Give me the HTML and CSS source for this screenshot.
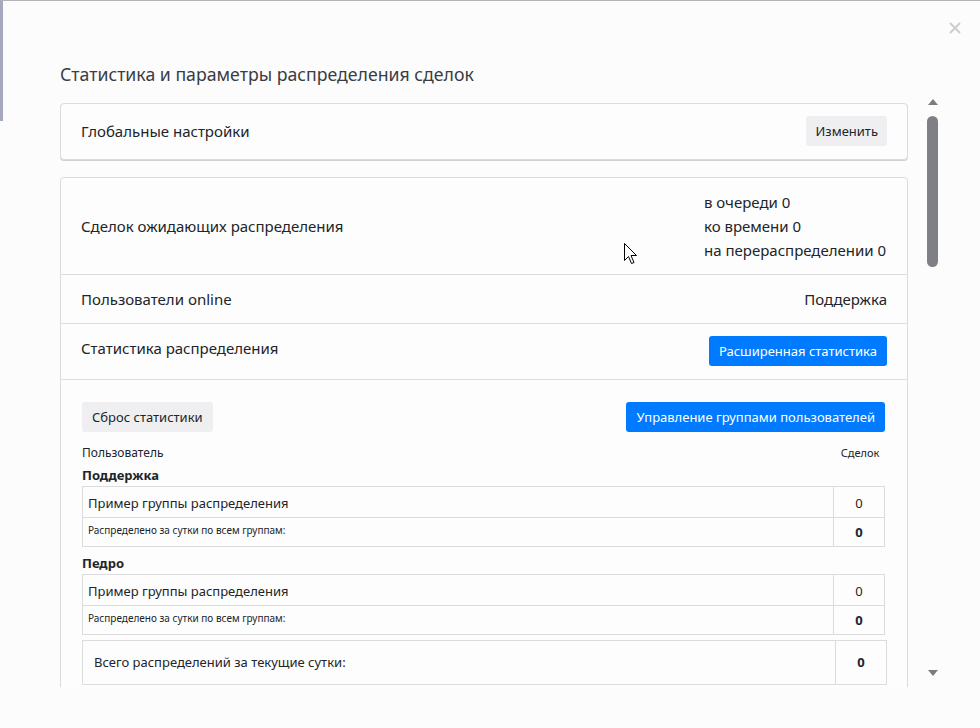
FILE: index.html
```html
<!DOCTYPE html>
<html lang="ru">
<head>
  <meta charset="UTF-8" />
  <meta name="viewport" content="width=device-width, initial-scale=1.0"/>
  <title>Статистика распределения</title>
  <link rel="stylesheet" href="styles.css">
</head>
<body>

  <div class="page">
    <div class="backdrop"></div>

    <div class="modal">
      <div class="modal-top">
        <span class="close" aria-label="Закрыть">
          <svg width="12" height="12" viewBox="0 0 12 12"><path d="M1 1L11 11M11 1L1 11" stroke="#cdcdd0" stroke-width="2"/></svg>
        </span>
      </div>

      <h2 class="modal-title">Статистика и параметры распределения сделок</h2>

      <div class="modal-body">
        <div class="scroll-area">

          <div class="card card-global">
            <span>Глобальные настройки</span>
            <button class="btn btn-light btn-edit">Изменить</button>
          </div>

          <div class="card">
            <div class="row">
              <span>Сделок ожидающих распределения</span>
              <div class="queue">
                <div>в очереди 0</div>
                <div>ко времени 0</div>
                <div>на перераспределении 0</div>
              </div>
            </div>

            <div class="row">
              <span>Пользователи online</span>
              <span>Поддержка</span>
            </div>

            <div class="row row-stats">
              <span class="label-top">Статистика распределения</span>
              <button class="btn btn-primary">Расширенная статистика</button>
            </div>

            <div class="stats">
              <div class="stats-actions">
                <button class="btn btn-light">Сброс статистики</button>
                <button class="btn btn-primary">Управление группами пользователей</button>
              </div>

              <div class="stats-head">
                <span class="head-user">Пользователь</span>
                <span class="head-count">Сделок</span>
              </div>

              <div class="user-name">Поддержка</div>
              <table class="user-table">
                <tr>
                  <td>Пример группы распределения</td>
                  <td class="num">0</td>
                </tr>
                <tr class="day-row">
                  <td><small>Распределено за сутки по всем группам:</small></td>
                  <td class="num"><b>0</b></td>
                </tr>
              </table>

              <div class="user-name">Педро</div>
              <table class="user-table">
                <tr>
                  <td>Пример группы распределения</td>
                  <td class="num">0</td>
                </tr>
                <tr class="day-row">
                  <td><small>Распределено за сутки по всем группам:</small></td>
                  <td class="num"><b>0</b></td>
                </tr>
              </table>

              <table class="total-table">
                <tr>
                  <td>Всего распределений за текущие сутки:</td>
                  <td class="num"><b>0</b></td>
                </tr>
              </table>
            </div>
          </div>

        </div>

        <div class="scrollbar">
          <span class="arrow-up"></span>
          <span class="thumb"></span>
          <span class="arrow-down"></span>
        </div>
      </div>
    </div>

    <svg class="cursor" width="13" height="21" viewBox="0 0 13 21">
      <path d="M0.5 0.5V17.5L4.5 13.5L7.5 20.5L10 19.5L7 12.5H12.5Z" fill="#fff" stroke="#000" stroke-width="1"/>
    </svg>
  </div>

</body>
</html>
```

FILE: styles.css
```css
body {
  margin: 0;
  background: #fcfcfd;
  font-family: 'Noto Sans', 'Open Sans', sans-serif;
  color: #212529;
}

.page {
  display: flex;
  height: 727px;
  border-top: 1px solid #b4b4b8;
  overflow: hidden;
  position: relative;
}

.backdrop {
  width: 3px;
  height: 120px;
  flex-shrink: 0;
  background: #a6a8bf;
}

.modal {
  flex: 1;
  padding: 21px 40px 0 57px;
}

.modal-top {
  display: flex;
  justify-content: flex-end;
  margin-right: -21px;
  height: 12px;
}

.close svg {
  display: block;
}

.modal-title {
  margin: 28px 0 10px 0;
  font-size: 17.7px;
  line-height: 24px;
  font-weight: normal;
  color: #3a3d42;
}

.modal-body {
  display: flex;
  height: 591px;
}

.scroll-area {
  width: 867px;
  padding: 7px 19px 0 0;
  box-sizing: border-box;
  overflow: hidden;
}

.card {
  border: 1px solid #dcdcde;
  border-radius: 4px;
  background: #fdfdfd;
  font-size: 15px;
  line-height: 24px;
}

.card-global {
  display: flex;
  justify-content: space-between;
  align-items: center;
  padding: 12px 20px 13px;
  margin-bottom: 17px;
  box-shadow: 0 1px 0 #d2d2d6;
}

.row {
  display: flex;
  justify-content: space-between;
  align-items: center;
  padding: 12px 20px;
  border-bottom: 1px solid #dcdcde;
}

.row-stats {
  padding-bottom: 13px;
}

.label-top {
  align-self: flex-start;
}

.queue {
  width: 183px;
}

.btn {
  font-family: inherit;
  font-size: 13px;
  line-height: 20px;
  padding: 5px 10px;
  border: none;
  border-radius: 3px;
  cursor: pointer;
}

.btn-edit {
  padding: 5px 9px;
}

.btn-light {
  background: #efeff1;
  color: #212529;
}

.btn-primary {
  background: #007bff;
  color: #fff;
}

.stats {
  padding: 22px 22px 24px 21px;
}

.stats-actions {
  display: flex;
  justify-content: space-between;
}

.stats-head {
  display: flex;
  justify-content: space-between;
  margin-top: 12px;
  font-size: 12px;
  line-height: 18px;
}

.head-count {
  width: 50px;
  text-align: center;
  font-size: 11px;
}

.user-name {
  font-size: 13px;
  font-weight: bold;
  line-height: 18px;
  margin-top: 7px;
}

.stats-head + .user-name {
  margin-top: 4px;
}

.user-table,
.total-table {
  width: 100%;
  border-collapse: collapse;
  font-size: 13px;
}

.user-table {
  margin-top: 2px;
}

.user-table td,
.total-table td {
  border: 1px solid #dcdcdc;
  padding: 7px 5px 4px;
  line-height: 19px;
  vertical-align: top;
}

.user-table .num {
  width: 40px;
  text-align: center;
}

.day-row td {
  padding: 4px 5px 8px;
}

.day-row small {
  display: block;
  font-size: 10px;
  line-height: 16px;
}

.day-row .num {
  padding: 5px 5px 4px;
}

.total-table {
  width: calc(100% + 2px);
  margin-top: 5px;
}

.total-table td {
  padding: 12px 11px;
}

.total-table .num {
  width: 28px;
  text-align: center;
}

.scrollbar {
  width: 11px;
  display: flex;
  flex-direction: column;
  align-items: center;
  padding: 3px 0 11px;
}

.arrow-up,
.arrow-down {
  width: 0;
  height: 0;
  border-left: 5.5px solid transparent;
  border-right: 5.5px solid transparent;
}

.arrow-up {
  border-bottom: 6px solid #7b7b80;
}

.arrow-down {
  border-top: 6px solid #7b7b80;
  margin-top: auto;
}

.thumb {
  width: 11px;
  height: 151px;
  margin-top: 11px;
  border-radius: 6px;
  background: #7f7f86;
}

.cursor {
  position: absolute;
  left: 624px;
  top: 242px;
}
```
